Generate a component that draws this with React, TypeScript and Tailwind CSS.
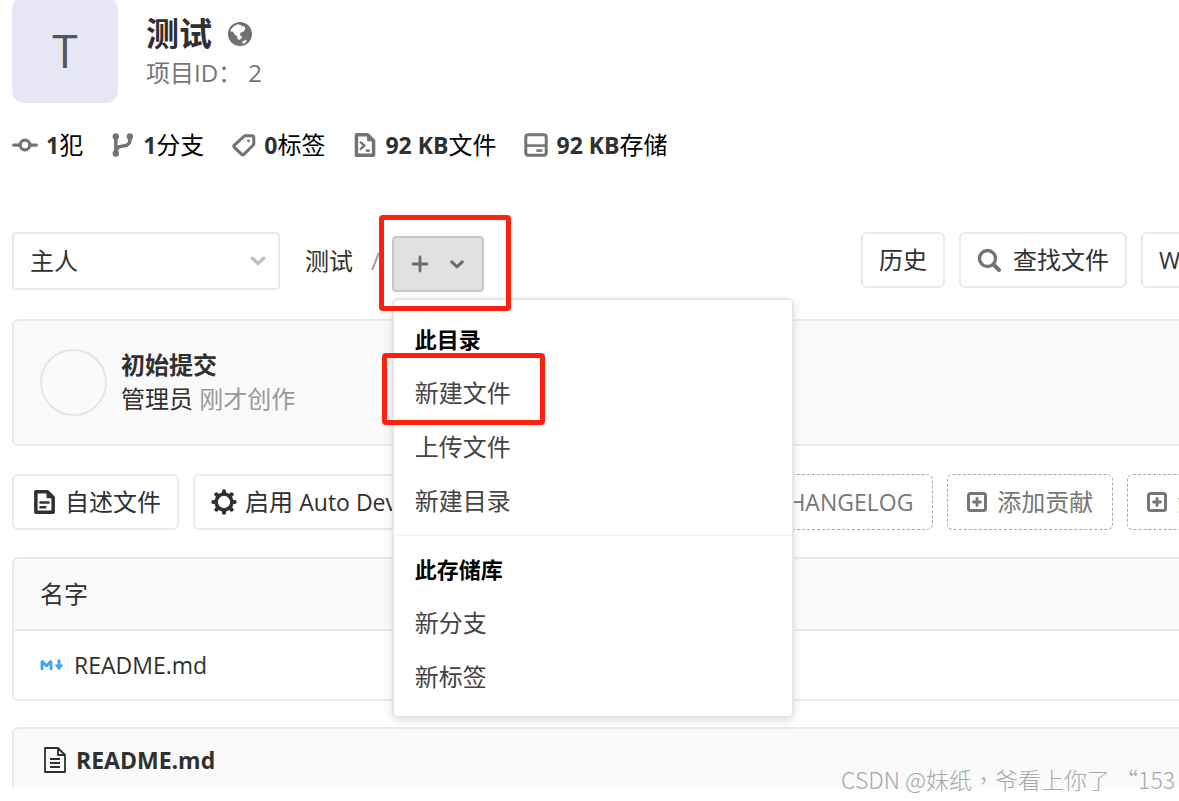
import { useState } from 'react';
import type { ReactNode } from 'react';

type IconProps = { className?: string };

const CommitIcon = ({ className }: IconProps) => (
  <svg viewBox="0 0 16 16" className={className} fill="none" stroke="currentColor" strokeWidth="2" strokeLinecap="round">
    <circle cx="8" cy="8" r="3" />
    <path d="M1 8h4M11 8h4" />
  </svg>
);

const BranchIcon = ({ className }: IconProps) => (
  <svg viewBox="1 0.500 14 15" className={className} fill="none" stroke="currentColor" strokeWidth="2.200" strokeLinecap="round">
    <g fill="currentColor" stroke="none">
      <circle cx="3.500" cy="2.700" r="2" />
      <circle cx="3.500" cy="13.300" r="2" />
      <circle cx="12.300" cy="2.700" r="2" />
    </g>
    <path d="M3.500 3v10M12.300 3.500v1.300a3.600 3.600 0 0 1-3.200 3.600L6.500 8.900a3.400 3.400 0 0 0-2.900 2.600" />
  </svg>
);

const LabelIcon = ({ className }: IconProps) => (
  <svg viewBox="0.500 1 15 14" className={className} fill="none" stroke="currentColor" strokeWidth="1.900" strokeLinejoin="round">
    <path d="M8.800 2.200h4.300a1 1 0 0 1 1 1v4.100a1 1 0 0 1-.3.7l-5.900 5.900a1 1 0 0 1-1.400 0L2 9.500a1 1 0 0 1 0-1.400l6.100-5.600a1 1 0 0 1 .7-.3z" />
    <circle cx="10.800" cy="5.400" r="0.900" fill="currentColor" stroke="none" />
  </svg>
);

const DocCodeIcon = ({ className }: IconProps) => (
  <svg viewBox="1 1 12 14" className={className} fill="none" stroke="currentColor" strokeWidth="2" strokeLinejoin="round">
    <path d="M2 2h6.500L12 5.500V14H2z" />
    <path d="M8.200 1.500v4.300h4.300z" fill="currentColor" stroke="none" />
    <path d="M4.500 6.500l2.200 1.900-2.200 1.900" strokeWidth="1.400" strokeLinecap="round" />
    <path d="M7.500 11.300h2.300" strokeWidth="1.400" />
  </svg>
);

const DiskIcon = ({ className }: IconProps) => (
  <svg viewBox="0 0 16 16" className={className} fill="none" stroke="currentColor" strokeWidth="2">
    <rect x="1.200" y="1.200" width="13.600" height="13.600" rx="1.600" />
    <path d="M1 8.400h14" strokeWidth="1.700" />
    <path d="M8.200 11.700h4" strokeWidth="1.700" />
  </svg>
);

const EarthIcon = ({ className }: IconProps) => (
  <svg viewBox="0 0 24 24" className={className}>
    <circle cx="12" cy="12" r="12" fill="currentColor" />
    <path
      d="M2.500 8L5.500 4.500 9.500 2.300l3.500.6 1.500 1.600 2-.3.800 2.300-1.500 3-3.300 1.200-.8 2.200 2.300 1.600-.6 2-2.300 1.500-1.600-1.200-.5-2.500-2.500-2-1.500-2.500-2.300-.4z"
      fill="#fff"
    />
    <path d="M14.500 19.200l3.500-1.200.7 1-1.700 2-2.500.8z" fill="#fff" />
  </svg>
);

const DocTextIcon = ({ className }: IconProps) => (
  <svg viewBox="0.500 0.500 13 15" className={className} fill="none" stroke="currentColor" strokeWidth="2.200" strokeLinejoin="round">
    <path d="M1.600 1.600h7.200l3.600 3.600v9.200H1.600z" />
    <path d="M8.300 1v4.700H13z" fill="currentColor" stroke="none" />
    <path d="M4.500 8.300h5M4.500 11.300h3" strokeWidth="1.600" strokeLinecap="round" />
  </svg>
);

const FileIcon = ({ className }: IconProps) => (
  <svg viewBox="0 0 22 26" className={className} fill="none" stroke="currentColor" strokeWidth="1.800" strokeLinejoin="round">
    <path d="M1 1h13l7 7v17H1zM14 1v7h7M6 12h10M6 16h10M6 20h10" />
  </svg>
);

const GearIcon = ({ className }: IconProps) => (
  <svg viewBox="0 0 28 28" className={className} fill="none" stroke="currentColor">
    <circle cx="14" cy="14" r="8.500" strokeWidth="3.800" />
    <path
      d="M14 4V2.500M14 24v1.500M4 14H2.500M24 14h1.500M6.900 6.900L5.800 5.800M21.100 6.900l1.100-1.100M6.900 21.100l-1.100 1.100M21.100 21.100l1.100 1.100"
      strokeWidth="4.400"
      strokeLinecap="round"
    />
  </svg>
);

const PlusSquareIcon = ({ className }: IconProps) => (
  <svg viewBox="0 0 20 20" className={className} fill="none" stroke="currentColor" strokeWidth="3">
    <rect x="1.500" y="1.500" width="17" height="17" rx="2" />
    <path d="M10 6.500v7M6.500 10h7" strokeWidth="2.800" strokeLinecap="round" />
  </svg>
);

const SearchIcon = ({ className }: IconProps) => (
  <svg viewBox="0 0 24 24" className={className} fill="none" stroke="currentColor" strokeWidth="3.400">
    <circle cx="10.500" cy="10.500" r="8" />
    <path d="M16.500 16.500l5.500 5.500" strokeLinecap="round" strokeWidth="4" />
  </svg>
);

const PlusIcon = ({ className }: IconProps) => (
  <svg viewBox="0 0 18 18" className={className} fill="none" stroke="currentColor" strokeWidth="2.800" strokeLinecap="round">
    <path d="M9 2v14M2 9h14" />
  </svg>
);

const ChevronIcon = ({ className }: IconProps) => (
  <svg viewBox="0 0 16 10" className={className} fill="none" stroke="currentColor" strokeWidth="3.400" strokeLinecap="round" strokeLinejoin="round">
    <path d="M2.200 2.200L8 7.600l5.800-5.400" />
  </svg>
);

const MarkdownIcon = ({ className }: IconProps) => (
  <svg viewBox="0 0 23 12" className={className}>
    <path d="M1.500 11V2l4.500 5 4.500-5v9" fill="none" stroke="#42a5f5" strokeWidth="2.800" strokeLinejoin="bevel" />
    <path d="M17 0.500h3v5h3L18.500 11.500 14 5.500h3z" fill="#42a5f5" />
  </svg>
);

const stats = [
  { icon: CommitIcon, size: 'h-[26px] w-[26px]', count: '1', label: '犯' },
  { icon: BranchIcon, size: 'h-6 w-6', count: '1', label: '分支' },
  { icon: LabelIcon, size: 'h-6 w-6', count: '0', label: '标签' },
  { icon: DocCodeIcon, size: 'h-6 w-6', count: '92 KB', label: '文件' },
  { icon: DiskIcon, size: 'h-6 w-6', count: '92 KB', label: '存储' },
];

const Button = ({ children, dashed = false }: { children: ReactNode; dashed?: boolean }) => (
  <button
    className={
      dashed
        ? 'flex h-14 shrink-0 items-center gap-[10px] whitespace-nowrap rounded-md border border-dashed border-[#a8a8a8] bg-white px-[19px] text-[#777777]'
        : 'flex h-14 shrink-0 items-center gap-2 whitespace-nowrap rounded-md border-2 border-[#eaeaea] bg-white px-4'
    }
  >
    {children}
  </button>
);

const MenuItem = ({ children, marked = false }: { children: ReactNode; marked?: boolean }) => (
  <li className="relative">
    <a href="#" className="flex h-[54px] items-center px-[21px] text-[#444444]">{children}</a>
    {marked && (
      <span className="pointer-events-none absolute -left-3 -top-[13px] h-[72px] w-[163px] rounded border-[5px] border-[#ff2010]" />
    )}
  </li>
);

const App = () => {
  const [branch, setBranch] = useState('主人');
  const [open, setOpen] = useState(true);

  return (
    <div className="relative overflow-hidden bg-white pb-[13px] font-['Open_Sans','Noto_Sans_CJK_SC',sans-serif] text-2xl leading-[34px] text-[#303030]">
      <div className="-mr-[88px] pl-3">
        {/* Project header */}
        <header className="flex gap-7">
          <div className="-mt-[3px] flex h-[106px] w-[106px] items-center justify-center rounded-xl bg-[#e6e6f4] text-[46px] text-[#555555]">
            T
          </div>
          <div className="pt-3">
            <div className="flex items-center gap-4">
              <h1 className="text-[33px] font-bold leading-[44px]">测试</h1>
              <EarthIcon className="h-6 w-6 text-[#707070]" />
            </div>
            <p className="text-[#777777]">项目ID： 2</p>
          </div>
        </header>

        <ul className="mt-[25px] flex gap-7">
          {stats.map((stat, index) => (
            <li key={index} className="flex items-center gap-2">
              <stat.icon className={`${stat.size} text-[#737373]`} />
              <a href="#" className="text-black">
                <strong className="text-[23px] font-bold text-[#303030]">{stat.count}</strong>
                {stat.label}
              </a>
            </li>
          ))}
        </ul>

        {/* Tree controls */}
        <div className="mt-[70px] flex items-start">
          <div className="relative">
            <select
              aria-label="主人"
              value={branch}
              onChange={(e) => setBranch(e.target.value)}
              className="h-[58px] w-[268px] appearance-none rounded border-2 border-[#eaeaea] bg-white px-4"
            >
              <option>主人</option>
            </select>
            <ChevronIcon className="pointer-events-none absolute right-3 top-6 h-[10px] w-5 text-[#bfbfbf]" />
          </div>
          <nav className="ml-[25px] flex">
            <a href="#" className="mr-[18px] leading-[58px]">测试</a>
            <span className="mr-3 leading-[58px] text-[#999999]">/</span>
            <div className="relative z-10 mt-1">
              <button
                aria-label="此目录"
                aria-expanded={open}
                onClick={() => setOpen(!open)}
                className="flex h-14 w-[92px] items-center justify-center gap-5 rounded border-2 border-[#c8c8c8] bg-[#e1e1e1] text-[#6b6b6b]"
              >
                <PlusIcon className="h-[18px] w-[18px]" />
                <ChevronIcon className="h-[9px] w-4" />
              </button>
              {open && (
                <div className="absolute left-0 top-[62px] w-[402px] rounded-md border-2 border-[#e6e6e6] bg-white pb-3 pt-[14px] shadow-[0_3px_8px_rgba(0,0,0,0.12)]">
                  <h2 className="px-[21px] pb-[2px] text-[22px] font-bold leading-[50px] text-black">此目录</h2>
                  <ul>
                    <MenuItem marked>新建文件</MenuItem>
                    <MenuItem>上传文件</MenuItem>
                    <MenuItem>新建目录</MenuItem>
                  </ul>
                  <hr className="mb-2 mt-[6px] border-t-2 border-[#f4f4f4]" />
                  <h2 className="px-[21px] pb-[2px] text-[22px] font-bold leading-[50px] text-black">此存储库</h2>
                  <ul>
                    <MenuItem>新分支</MenuItem>
                    <MenuItem>新标签</MenuItem>
                  </ul>
                </div>
              )}
              <span className="pointer-events-none absolute -left-[13px] -top-[21px] h-24 w-[132px] rounded border-[5px] border-[#ff2010]" />
            </div>
          </nav>
          <div className="ml-auto flex gap-[14px]">
            <Button>历史</Button>
            <Button>
              <SearchIcon className="mr-1 h-6 w-6 text-[#737373]" />
              查找文件
            </Button>
            <Button>
              <span className="text-[23px]">Web IDE</span>
            </Button>
          </div>
        </div>

        {/* Last commit */}
        <section className="mt-[27px] flex items-center gap-[14px] rounded-md border-2 border-[#eaeaea] bg-[#fafafa] px-[26px] pb-7 pt-[27px]">
          <div className="h-[67px] w-[67px] rounded-full border-2 border-[#e5e5e5]" />
          <div>
            <p className="font-bold">初始提交</p>
            <p className="text-[#999999]">
              <a href="#" className="text-[#303030]">管理员</a> 刚才创作
            </p>
          </div>
        </section>

        <div className="mt-7 flex gap-[14px]">
          <Button>
            <DocTextIcon className="ml-1 mr-0.5 h-6 w-[21px]" />
            自述文件
          </Button>
          <Button>
            <GearIcon className="h-[26px] w-[26px]" />
            <span>启用 <span className="text-[23px]">Auto DevOps</span></span>
          </Button>
          <Button dashed>
            <PlusSquareIcon className="h-5 w-5" />
            添加许可证
          </Button>
          <Button dashed>
            <PlusSquareIcon className="h-5 w-5" />
            <span>添加<span className="text-[23px]">CHANGELOG</span></span>
          </Button>
          <Button dashed>
            <PlusSquareIcon className="h-5 w-5" />
            添加贡献
          </Button>
          <Button dashed>
            <PlusSquareIcon className="h-5 w-5" />
            添加
          </Button>
        </div>

        {/* File list */}
        <div className="mt-[27px] overflow-hidden rounded-md border-2 border-[#eaeaea]">
          <table className="w-full text-left">
            <thead>
              <tr className="border-b-2 border-[#eaeaea] bg-[#fafafa]">
                <th className="px-[26px] py-[18px] font-normal">名字</th>
              </tr>
            </thead>
            <tbody>
              <tr>
                <td className="px-[26px] py-[17px]">
                  <a href="#" className="flex items-center gap-[10px]">
                    <MarkdownIcon className="h-3 w-6" />
                    <span className="text-[23px]">README.md</span>
                  </a>
                </td>
              </tr>
            </tbody>
          </table>
        </div>

        <section className="mt-[26px] flex items-center gap-[10px] rounded-t-md border-2 border-b-0 border-[#eaeaea] bg-[#fafafa] px-[30px] pb-[11px] pt-[14px]">
          <FileIcon className="h-[26px] w-[22px]" />
          <strong className="text-[23px] font-bold">README.md</strong>
        </section>
      </div>

      <p className="absolute bottom-[6px] right-1 whitespace-pre font-['Noto_Sans_CJK_TC',sans-serif] text-[23px] font-light leading-8 text-[#a8a8a8]">
        CSDN @妹纸，爷看上你了 “153
      </p>
    </div>
  );
};

export default App;
